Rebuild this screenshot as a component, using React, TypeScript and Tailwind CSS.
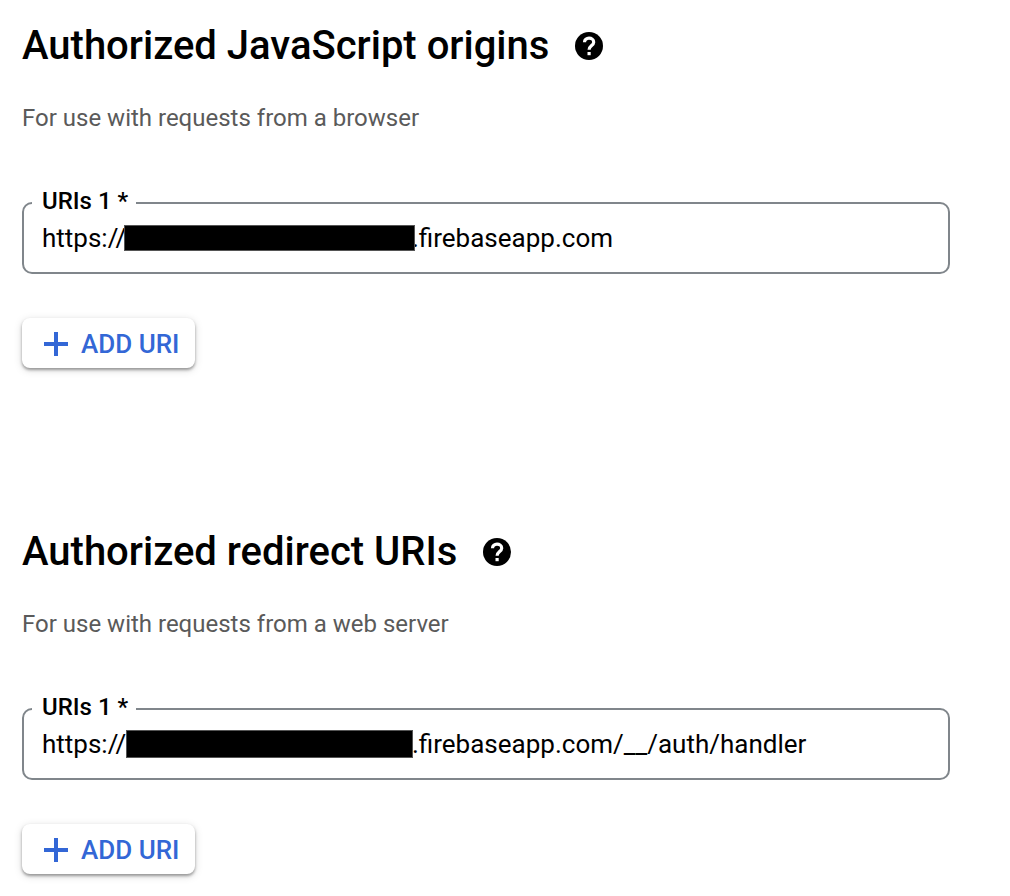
import React from "react";

type UriSectionProps = {
  id: string;
  title: string;
  description: string;
  suffix: string;
  maskClass: string;
};

function HelpIcon() {
  return (
    <svg viewBox="0 0 28 28" className="size-7" aria-hidden="true">
      <circle cx="14" cy="14" r="14" fill="currentColor" />
      <path
        d="M9.500 10.300c0-2.500 2-4.100 4.500-4.100s4.700 1.500 4.700 4c0 3.200-4.600 3.600-4.600 7.600"
        fill="none"
        stroke="#fff"
        strokeWidth="3.200"
      />
      <path d="M12.500 20h3.200v3.200h-3.200z" fill="#fff" />
    </svg>
  );
}

function PlusIcon() {
  return (
    <svg viewBox="0 0 24 24" className="size-6" fill="currentColor" aria-hidden="true">
      <path d="M10 0h4v10h10v4H14v10h-4V14H0v-4h10z" />
    </svg>
  );
}

function UriSection({ id, title, description, suffix, maskClass }: UriSectionProps) {
  return (
    <section className="flex flex-col items-start">
      <div className="flex items-center gap-[26px]">
        <h2 className="text-[40px] leading-[48px] font-medium">{title}</h2>
        <button type="button" aria-label={`Help: ${title}`}>
          <HelpIcon />
        </button>
      </div>
      <p className="mt-8 text-2xl leading-8 text-[#5a5a5a]">{description}</p>
      <fieldset className="mt-[55px] w-full rounded-[10px] border-2 border-[#80868b] pt-[5px] pb-[18px]">
        <legend className="ml-2 pr-2 pb-1 pl-[10px] text-2xl leading-6 font-medium">
          <label htmlFor={id}>URIs 1 *</label>
        </legend>
        <div className="flex items-center px-[18px] text-[26px] leading-8">
          <input id={id} defaultValue="https://" className="w-[84px] shrink-0 outline-none" />
          <span className="z-10 flex w-[286px] shrink-0">
            <span className={maskClass} />
          </span>
          <input
            aria-label={`${title} domain`}
            defaultValue={suffix}
            className="min-w-0 flex-1 outline-none"
          />
        </div>
      </fieldset>
      <button
        type="button"
        className="mt-11 flex h-[50px] items-center gap-[13px] rounded-lg bg-white pt-0.5 pr-4 pl-[22px] text-[26px] leading-8 font-medium text-[#3367d6] shadow-[0_2px_3px_rgba(0,0,0,0.35),0_2px_8px_rgba(0,0,0,0.15)]"
      >
        <PlusIcon />
        ADD URI
      </button>
    </section>
  );
}

export default function App() {
  return (
    <main className="flex flex-col gap-40 bg-white pt-[22px] pr-[60px] pb-5 pl-[22px] font-['Roboto',sans-serif] text-black">
      <UriSection
        id="origin-uri"
        title="Authorized JavaScript origins"
        description="For use with requests from a browser"
        suffix=".firebaseapp.com"
        maskClass="-ml-[2px] h-[26px] w-[291px] shrink-0 border border-[#555] bg-black"
      />
      <UriSection
        id="redirect-uri"
        title="Authorized redirect URIs"
        description="For use with requests from a web server"
        suffix=".firebaseapp.com/__/auth/handler"
        maskClass="h-7 w-[287px] shrink-0 border border-[#555] bg-black"
      />
    </main>
  );
}
